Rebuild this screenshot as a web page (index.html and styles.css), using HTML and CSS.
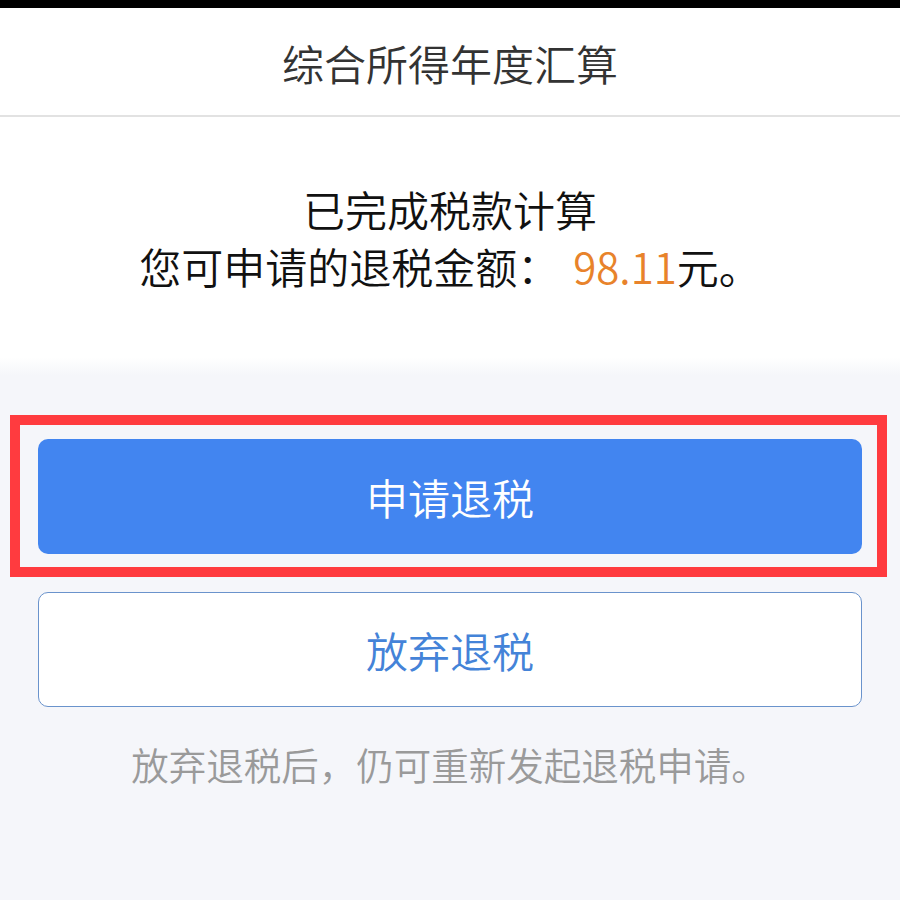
FILE: index.html
```html
<!DOCTYPE html>
<html lang="zh-CN">
<head>
<meta charset="utf-8">
<title>综合所得年度汇算</title>
<link rel="stylesheet" href="styles.css">
</head>
<body>
<div class="statusbar"></div>
<header class="header">
  <h1 class="title">综合所得年度汇算</h1>
</header>
<section class="summary">
  <p class="line">已完成税款计算</p>
  <p class="line">您可申请的退税金额：<span class="amount">98.11</span>元。</p>
</section>
<main class="actions">
  <div class="highlight">
    <button class="btn btn-primary">申请退税</button>
  </div>
  <button class="btn btn-secondary">放弃退税</button>
  <p class="note">放弃退税后，仍可重新发起退税申请。</p>
</main>
</body>
</html>
```
FILE: styles.css
```css
* { box-sizing: border-box; }
html, body {
  margin: 0;
  padding: 0;
  background: #f5f6fa;
  font-family: "Noto Sans CJK SC", "Noto Sans", sans-serif;
  font-weight: 350;
}
.statusbar {
  height: 8px;
  background: #000;
}
.header {
  height: 109px;
  background: #fff;
  border-bottom: 2px solid #e2e2e2;
  display: flex;
  align-items: center;
  justify-content: center;
}
.title {
  margin: 0;
  font-size: 42px;
  font-weight: 350;
  color: #333;
  line-height: 1;
  padding-top: 2px;
}
.summary {
  height: 258px;
  padding-top: 63px;
  background: linear-gradient(to bottom, #fff 0, #fff 240px, #f5f6fa 258px);
  text-align: center;
}
.line {
  margin: 0;
  font-size: 42px;
  line-height: 57px;
  color: #111;
}
.amount {
  color: #e8832b;
  margin-left: 14px;
}
.actions {
  padding-top: 40px;
  display: flex;
  flex-direction: column;
}
.highlight {
  margin: 0 13px 0 10px;
  border: 10px solid #ff3b3f;
  padding: 14px 15px 13px 18px;
}
.btn {
  display: block;
  width: 824px;
  height: 115px;
  border-radius: 10px;
  font-family: inherit;
  font-weight: 350;
  font-size: 42px;
  cursor: pointer;
}
.btn-primary {
  width: 100%;
  border: none;
  background: #4285f0;
  color: #fff;
}
.btn-secondary {
  margin: 15px 0 0 38px;
  border: 1.5px solid #6a93cc;
  background: #fff;
  color: #4483d8;
}
.note {
  margin: 32px 0 0;
  text-align: center;
  font-size: 37.5px;
  line-height: 50px;
  color: #9a9a9a;
}
```
